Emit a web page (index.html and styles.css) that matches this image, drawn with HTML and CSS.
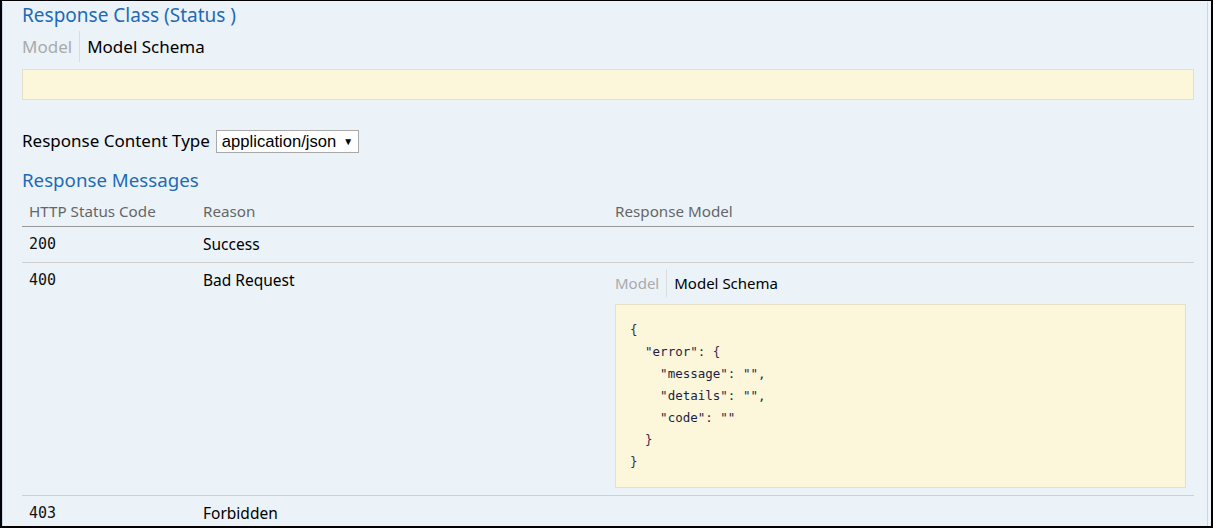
FILE: index.html
```html
<!DOCTYPE html>
<html>
<head>
<meta charset="utf-8">
<link rel="stylesheet" href="styles.css">
</head>
<body>
<div class="frame">
  <div class="panel">
    <h4 class="heading first">Response Class (Status )</h4>
    <div class="tabs big">
      <span class="tab off">Model</span>
      <span class="tab on">Model Schema</span>
    </div>
    <div class="signature empty"></div>

    <div class="ctype">
      <span class="ctype-label">Response Content Type</span>
      <span class="select">application/json <span class="arrow">▼</span></span>
    </div>

    <h4 class="heading second">Response Messages</h4>
    <div class="table">
      <div class="row head">
        <div class="cell">HTTP Status Code</div>
        <div class="cell">Reason</div>
        <div class="cell">Response Model</div>
      </div>
      <div class="row">
        <div class="cell code">200</div>
        <div class="cell">Success</div>
        <div class="cell"></div>
      </div>
      <div class="row">
        <div class="cell code">400</div>
        <div class="cell">Bad Request</div>
        <div class="cell model">
          <div class="tabs small">
            <span class="tab off">Model</span>
            <span class="tab on">Model Schema</span>
          </div>
          <pre class="signature json"><span class="p">{</span>
  <span class="s">"error"</span>: <span class="p">{</span>
    <span class="s">"message"</span>: <span class="s">""</span>,
    <span class="s">"details"</span>: <span class="s">""</span>,
    <span class="s">"code"</span>: <span class="s">""</span>
  <span class="p">}</span>
<span class="p">}</span></pre>
        </div>
      </div>
      <div class="row">
        <div class="cell code">403</div>
        <div class="cell">Forbidden</div>
        <div class="cell"></div>
      </div>
    </div>
  </div>
</div>
</body>
</html>
```

FILE: styles.css
```css
html, body {
  margin: 0;
  padding: 0;
  background: #ffffff;
}

.frame {
  box-sizing: border-box;
  width: 1213px;
  height: 528px;
  border-top: 1px solid #000;
  border-left: 2px solid #000;
  border-right: 2px solid #000;
  border-bottom: 2px solid #000;
  overflow: hidden;
  background: #eef4fa;
}

.panel {
  box-sizing: border-box;
  height: 100%;
  margin-right: 3px;
  background: #ebf3f9;
  border-left: 1px solid #c3d9ec;
  border-right: 1px solid #c3d9ec;
  padding: 0 13px 0 19px;
  font-family: "Noto Sans", "Open Sans", sans-serif;
  color: #000;
}

.heading {
  margin: 0;
  font-weight: normal;
  font-size: 19px;
  line-height: 26px;
  color: #1e6ab5;
}

.heading.first {
  margin-top: 1px;
}

.heading.second {
  margin-top: 14px;
  font-size: 18.7px;
}

.tabs {
  display: flex;
}

.tabs.big {
  margin-top: 3px;
  height: 31px;
  font-size: 17px;
  line-height: 31px;
}

.tabs.small {
  height: 28px;
  font-size: 15px;
  line-height: 28px;
}

.tab.off {
  color: #aaaaaa;
  padding-right: 7px;
  border-right: 1px solid #dddddd;
}

.tab.on {
  color: #000;
  padding-left: 7px;
}

.signature {
  box-sizing: border-box;
  background: #fcf6db;
  border: 1px solid #e5e0c6;
  margin: 7px 0 0 0;
}

.signature.empty {
  height: 31px;
}

.ctype {
  margin-top: 30px;
  height: 23px;
  display: flex;
  align-items: center;
  font-size: 17px;
}

.ctype-label {
  margin-right: 6px;
  position: relative;
  top: -1px;
}

.select {
  box-sizing: border-box;
  height: 23px;
  width: 143px;
  border: 1px solid #a9a9a9;
  background: #fff;
  font-family: "Liberation Sans", Arial, sans-serif;
  font-size: 16.6px;
  line-height: 21px;
  padding-left: 5px;
  display: flex;
  align-items: center;
}

.arrow {
  font-size: 10px;
  margin-left: 7px;
}

.table {
  font-size: 15.5px;
}

.row {
  display: grid;
  grid-template-columns: 174px 412px 1fr;
  border-bottom: 1px solid #d0d0d0;
}

.row.head {
  border-bottom-color: #999999;
  color: #666666;
  font-size: 15.2px;
}

.cell {
  padding: 7px 7px 8px 7px;
  line-height: 20px;
}

.row.head .cell {
  padding-top: 8px;
  padding-bottom: 5px;
}

.cell.code {
  font-family: "DejaVu Sans Mono", "Liberation Mono", monospace;
  font-size: 15px;
  color: #111;
  padding-left: 7px;
}

.cell.model {
  padding-top: 6px;
  padding-right: 8px;
  padding-bottom: 7px;
}

.signature.json {
  font-family: "DejaVu Sans Mono", "Liberation Mono", monospace;
  font-size: 12.5px;
  line-height: 22px;
  padding: 14px 14px;
  color: #2a2a3a;
  white-space: pre;
}

.json .p {
  color: #3a2a4a;
}

.json .s {
  color: #1b1f45;
}
```
